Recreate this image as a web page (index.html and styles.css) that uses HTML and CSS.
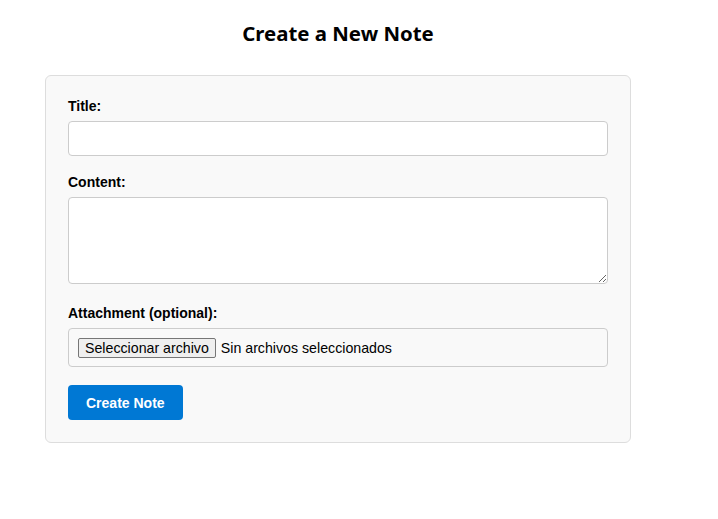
FILE: index.html
```html
<!DOCTYPE html>
<html lang="en">
<head>
<meta charset="utf-8">
<title>Create a New Note</title>
<link rel="stylesheet" href="styles.css">
</head>
<body>
<div class="page">
  <h2 class="page-title">Create a New Note</h2>
  <form class="card">
    <div class="field">
      <label class="label" for="title">Title:</label>
      <input class="input" id="title" type="text">
    </div>
    <div class="field">
      <label class="label" for="content">Content:</label>
      <textarea class="textarea" id="content"></textarea>
    </div>
    <div class="field">
      <label class="label">Attachment (optional):</label>
      <div class="file-box">
        <span class="file-btn">Seleccionar archivo</span>
        <span class="file-text">Sin archivos seleccionados</span>
      </div>
    </div>
    <button class="submit" type="button">Create Note</button>
  </form>
</div>
</body>
</html>
```

FILE: styles.css
```css
html, body {
  margin: 0;
  padding: 0;
  background: #ffffff;
}
body {
  font-family: "Liberation Sans", Arial, sans-serif;
  color: #000;
}
.page {
  width: 586px;
  margin-left: 45px;
  padding-top: 20px;
}
.page-title {
  margin: 0 0 28px 0;
  text-align: center;
  font-family: "Noto Sans", "Open Sans", sans-serif;
  font-weight: 700;
  font-size: 20.4px;
  line-height: 27px;
}
.card {
  box-sizing: border-box;
  background: #f9f9f9;
  border: 1px solid #dddddd;
  border-radius: 6px;
  padding: 22px;
  display: flex;
  flex-direction: column;
}
.field {
  display: flex;
  flex-direction: column;
  margin-bottom: 18px;
}
.label {
  font-weight: 700;
  font-size: 14px;
  line-height: 16px;
  margin-bottom: 7px;
}
.input, .textarea {
  box-sizing: border-box;
  width: 100%;
  border: 1px solid #cccccc;
  border-radius: 4px;
  background: #fff;
  font-family: "Liberation Sans", Arial, sans-serif;
  font-size: 14px;
  margin: 0;
}
.input {
  height: 35px;
  padding: 8px;
}
.textarea {
  display: block;
  height: 87px;
  padding: 8px;
  resize: vertical;
}
.field:nth-child(2) {
  margin-bottom: 21px;
}
.file-box {
  box-sizing: border-box;
  height: 39px;
  border: 1px solid #cccccc;
  border-radius: 4px;
  background: #f9f9f9;
  padding: 0 9px;
  display: flex;
  align-items: center;
  font-size: 14px;
}
.file-btn {
  box-sizing: border-box;
  height: 20px;
  line-height: 18px;
  padding: 0 6px 0 6px;
  border: 1px solid #767676;
  border-radius: 2px;
  background: #efefef;
  margin-right: 5px;
  font-size: 14.2px;
}
.file-text {
  font-size: 14.2px;
}
.submit {
  align-self: flex-start;
  height: 35px;
  padding: 0 18px;
  border: none;
  border-radius: 4px;
  background: #0078d4;
  color: #fff;
  font-family: "Liberation Sans", Arial, sans-serif;
  font-weight: 700;
  font-size: 14px;
}
```
